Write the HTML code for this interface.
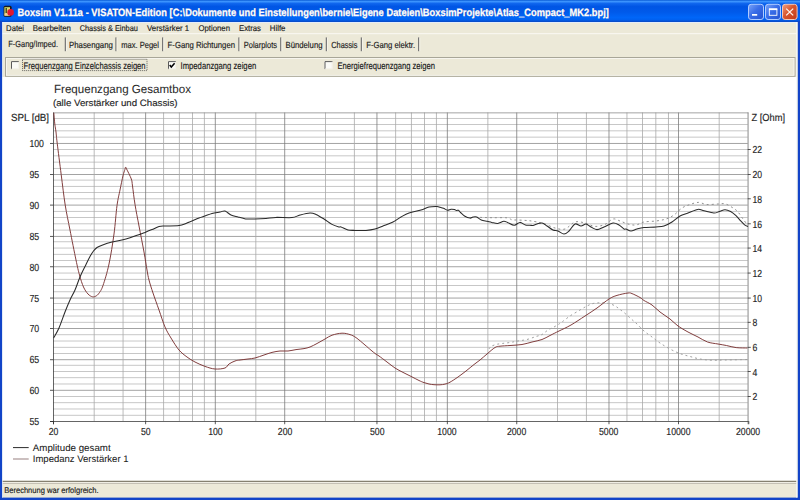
<!DOCTYPE html>
<html><head><meta charset="utf-8"><style>
html,body{margin:0;padding:0;width:800px;height:500px;overflow:hidden;background:#ECE9D8}
svg{display:block;font-family:"Liberation Sans", sans-serif;text-rendering:geometricPrecision}
</style></head><body>
<svg width="800" height="500" viewBox="0 0 800 500">
<rect x="0" y="0" width="800" height="500" fill="#ECE9D8"/>
<defs>
<linearGradient id="tb" x1="0" y1="0" x2="0" y2="1">
<stop offset="0" stop-color="#0A5CD6"/>
<stop offset="0.07" stop-color="#3C94FE"/>
<stop offset="0.16" stop-color="#0F66EE"/>
<stop offset="0.30" stop-color="#0055E4"/>
<stop offset="0.55" stop-color="#005AEA"/>
<stop offset="0.80" stop-color="#0066F8"/>
<stop offset="0.90" stop-color="#0060F0"/>
<stop offset="1" stop-color="#0A48C0"/>
</linearGradient>
<linearGradient id="btn" x1="0" y1="0" x2="1" y2="1">
<stop offset="0" stop-color="#7AA4F8"/>
<stop offset="0.45" stop-color="#3A6EE8"/>
<stop offset="1" stop-color="#2452D0"/>
</linearGradient>
<linearGradient id="cls" x1="0" y1="0" x2="1" y2="1">
<stop offset="0" stop-color="#F0A080"/>
<stop offset="0.45" stop-color="#D8562E"/>
<stop offset="1" stop-color="#C23A18"/>
</linearGradient>
</defs>
<rect x="0" y="0" width="800" height="22" fill="url(#tb)"/>
<rect x="0" y="21" width="2.1" height="479" fill="#1244C8"/>
<rect x="797.6" y="21" width="2.4" height="479" fill="#1244C8"/>
<rect x="0" y="497.6" width="800" height="2.4" fill="#1244C8"/>
<rect x="3.6" y="5.8" width="8" height="11" rx="1.5" fill="#1A1A1A"/>
<rect x="4.4" y="7.2" width="5.6" height="8.6" fill="#D8DC70"/>
<rect x="5.6" y="8" width="1.2" height="5" fill="#303010"/>
<rect x="4.6" y="13.5" width="3.5" height="2" fill="#F0C8A0"/>
<circle cx="10.6" cy="12.4" r="3.3" fill="#E01830"/>
<text x="18.3" y="16.4" font-size="10.6" text-anchor="start" fill="#0A2A90" font-weight="bold" textLength="591.5" lengthAdjust="spacingAndGlyphs" opacity="0.7">Boxsim V1.11a - VISATON-Edition [C:\Dokumente und Einstellungen\bernie\Eigene Dateien\BoxsimProjekte\Atlas_Compact_MK2.bpj]</text>
<text x="17.5" y="15.6" font-size="10.6" text-anchor="start" fill="#FFFFFF" font-weight="bold" textLength="591.5" lengthAdjust="spacingAndGlyphs" stroke="#FFFFFF" stroke-width="0.3">Boxsim V1.11a - VISATON-Edition [C:\Dokumente und Einstellungen\bernie\Eigene Dateien\BoxsimProjekte\Atlas_Compact_MK2.bpj]</text>
<rect x="748.5" y="4.3" width="15" height="15.2" rx="2.6" fill="url(#btn)" stroke="#B0CCFF" stroke-width="1"/>
<rect x="765.5" y="4.3" width="15" height="15.2" rx="2.6" fill="url(#btn)" stroke="#B0CCFF" stroke-width="1"/>
<rect x="752" y="14" width="5.2" height="1.7" fill="#FFFFFF"/>
<rect x="769.3" y="8.9" width="7.6" height="6.4" fill="none" stroke="#FFFFFF" stroke-width="0.9"/>
<rect x="769" y="8.5" width="8.2" height="1.6" fill="#FFFFFF"/>
<rect x="782.5" y="4.3" width="14.6" height="15.2" rx="2.6" fill="url(#cls)" stroke="#F4C8B8" stroke-width="1"/>
<path d="M786.2 8.6 L793.2 15.4 M793.2 8.6 L786.2 15.4" stroke="#FFF4EE" stroke-width="1.3"/>
<rect x="2" y="22" width="795" height="1" fill="#E4ECF8"/>
<text x="6.1" y="31.2" font-size="8.4" text-anchor="start" fill="#1a1a1a" stroke="#1a1a1a" stroke-width="0.15" textLength="18.0" lengthAdjust="spacingAndGlyphs">Datei</text>
<text x="32.8" y="31.2" font-size="8.4" text-anchor="start" fill="#1a1a1a" stroke="#1a1a1a" stroke-width="0.15" textLength="38.1" lengthAdjust="spacingAndGlyphs">Bearbeiten</text>
<text x="79.7" y="31.2" font-size="8.4" text-anchor="start" fill="#1a1a1a" stroke="#1a1a1a" stroke-width="0.15" textLength="58.2" lengthAdjust="spacingAndGlyphs">Chassis &amp; Einbau</text>
<text x="147.1" y="31.2" font-size="8.4" text-anchor="start" fill="#1a1a1a" stroke="#1a1a1a" stroke-width="0.15" textLength="42.0" lengthAdjust="spacingAndGlyphs">Verstärker 1</text>
<text x="198.5" y="31.2" font-size="8.4" text-anchor="start" fill="#1a1a1a" stroke="#1a1a1a" stroke-width="0.15" textLength="31.5" lengthAdjust="spacingAndGlyphs">Optionen</text>
<text x="239" y="31.2" font-size="8.4" text-anchor="start" fill="#1a1a1a" stroke="#1a1a1a" stroke-width="0.15" textLength="22" lengthAdjust="spacingAndGlyphs">Extras</text>
<text x="269.8" y="31.2" font-size="8.4" text-anchor="start" fill="#1a1a1a" stroke="#1a1a1a" stroke-width="0.15" textLength="15.6" lengthAdjust="spacingAndGlyphs">Hilfe</text>
<rect x="2" y="33.2" width="795" height="1" fill="#FAF9F4"/>
<text x="8.3" y="46.8" font-size="8.9" text-anchor="start" fill="#1a1a1a" stroke="#1a1a1a" stroke-width="0.15" textLength="49.7" lengthAdjust="spacingAndGlyphs">F-Gang/Imped.</text>
<text x="69" y="48.1" font-size="8.9" text-anchor="start" fill="#1a1a1a" stroke="#1a1a1a" stroke-width="0.15" textLength="43.9" lengthAdjust="spacingAndGlyphs">Phasengang</text>
<text x="121.2" y="48.1" font-size="8.9" text-anchor="start" fill="#1a1a1a" stroke="#1a1a1a" stroke-width="0.15" textLength="37.8" lengthAdjust="spacingAndGlyphs">max. Pegel</text>
<text x="167.6" y="48.1" font-size="8.9" text-anchor="start" fill="#1a1a1a" stroke="#1a1a1a" stroke-width="0.15" textLength="67.4" lengthAdjust="spacingAndGlyphs">F-Gang Richtungen</text>
<text x="243.75" y="48.1" font-size="8.9" text-anchor="start" fill="#1a1a1a" stroke="#1a1a1a" stroke-width="0.15" textLength="33.2" lengthAdjust="spacingAndGlyphs">Polarplots</text>
<text x="285.5" y="48.1" font-size="8.9" text-anchor="start" fill="#1a1a1a" stroke="#1a1a1a" stroke-width="0.15" textLength="37.0" lengthAdjust="spacingAndGlyphs">Bündelung</text>
<text x="331.25" y="48.1" font-size="8.9" text-anchor="start" fill="#1a1a1a" stroke="#1a1a1a" stroke-width="0.15" textLength="26.2" lengthAdjust="spacingAndGlyphs">Chassis</text>
<text x="366.25" y="48.1" font-size="8.9" text-anchor="start" fill="#1a1a1a" stroke="#1a1a1a" stroke-width="0.15" textLength="48.8" lengthAdjust="spacingAndGlyphs">F-Gang elektr.</text>
<rect x="64.75" y="37.4" width="1.2" height="13.8" fill="#767676"/>
<rect x="66.05" y="37.8" width="1" height="13.2" fill="#FFFFFF" opacity="0.45"/>
<rect x="115.30" y="37.4" width="1.2" height="13.8" fill="#767676"/>
<rect x="116.60" y="37.8" width="1" height="13.2" fill="#FFFFFF" opacity="0.45"/>
<rect x="162.00" y="37.4" width="1.2" height="13.8" fill="#767676"/>
<rect x="163.30" y="37.8" width="1" height="13.2" fill="#FFFFFF" opacity="0.45"/>
<rect x="238.25" y="37.4" width="1.2" height="13.8" fill="#767676"/>
<rect x="239.55" y="37.8" width="1" height="13.2" fill="#FFFFFF" opacity="0.45"/>
<rect x="280.10" y="37.4" width="1.2" height="13.8" fill="#767676"/>
<rect x="281.40" y="37.8" width="1" height="13.2" fill="#FFFFFF" opacity="0.45"/>
<rect x="325.75" y="37.4" width="1.2" height="13.8" fill="#767676"/>
<rect x="327.05" y="37.8" width="1" height="13.2" fill="#FFFFFF" opacity="0.45"/>
<rect x="360.75" y="37.4" width="1.2" height="13.8" fill="#767676"/>
<rect x="362.05" y="37.8" width="1" height="13.2" fill="#FFFFFF" opacity="0.45"/>
<rect x="418.00" y="37.4" width="1.2" height="13.8" fill="#767676"/>
<rect x="419.30" y="37.8" width="1" height="13.2" fill="#FFFFFF" opacity="0.45"/>
<rect x="5.5" y="57.5" width="789.5" height="18.8" fill="none" stroke="#A8A698" stroke-width="1"/>
<rect x="6.5" y="58.5" width="787.5" height="16.8" fill="none" stroke="#FFFFFF" stroke-width="0.8" opacity="0.7"/>
<rect x="11" y="61.1" width="8.0" height="8.0" fill="#FAFAF6"/>
<path d="M11.5 69.1 V61.6 H19.0" fill="none" stroke="#5A5A5A" stroke-width="1"/>
<path d="M18.6 61.7 V68.69999999999999 H11.6" fill="none" stroke="#F0EEE4" stroke-width="0.8"/>
<rect x="168" y="61.1" width="8.0" height="8.0" fill="#FAFAF6"/>
<path d="M168.5 69.1 V61.6 H176.0" fill="none" stroke="#5A5A5A" stroke-width="1"/>
<path d="M175.6 61.7 V68.69999999999999 H168.6" fill="none" stroke="#F0EEE4" stroke-width="0.8"/>
<path d="M169.7 65.0 L171.3 67.0 L174.6 63.300000000000004" fill="none" stroke="#000" stroke-width="1.5"/>
<rect x="324.5" y="61.1" width="8.0" height="8.0" fill="#FAFAF6"/>
<path d="M325.0 69.1 V61.6 H332.5" fill="none" stroke="#5A5A5A" stroke-width="1"/>
<path d="M332.1 61.7 V68.69999999999999 H325.1" fill="none" stroke="#F0EEE4" stroke-width="0.8"/>
<text x="23.6" y="68.5" font-size="9.6" text-anchor="start" fill="#1a1a1a" stroke="#1a1a1a" stroke-width="0.15" textLength="122" lengthAdjust="spacingAndGlyphs">Frequenzgang Einzelchassis zeigen</text>
<text x="180.5" y="68.5" font-size="9.6" text-anchor="start" fill="#1a1a1a" stroke="#1a1a1a" stroke-width="0.15" textLength="75.7" lengthAdjust="spacingAndGlyphs">Impedanzgang zeigen</text>
<text x="337.5" y="68.5" font-size="9.6" text-anchor="start" fill="#1a1a1a" stroke="#1a1a1a" stroke-width="0.15" textLength="97.5" lengthAdjust="spacingAndGlyphs">Energiefrequenzgang zeigen</text>
<rect x="22.5" y="59.3" width="124.5" height="11.3" fill="none" stroke="#404040" stroke-width="0.8" stroke-dasharray="1 1"/>
<rect x="2" y="77" width="795" height="404" fill="#FFFFFF"/>
<rect x="53.1250" y="414.8438" width="694.5312" height="0.78125" fill="#B8B8B8"/>
<rect x="53.1250" y="408.5938" width="694.5312" height="0.78125" fill="#B8B8B8"/>
<rect x="53.1250" y="402.3438" width="694.5312" height="0.78125" fill="#B8B8B8"/>
<rect x="53.1250" y="396.0938" width="694.5312" height="0.78125" fill="#B8B8B8"/>
<rect x="53.1250" y="389.8438" width="694.5312" height="0.78125" fill="#8A8A8A"/>
<rect x="53.1250" y="383.5938" width="694.5312" height="0.78125" fill="#B8B8B8"/>
<rect x="53.1250" y="377.3438" width="694.5312" height="0.78125" fill="#B8B8B8"/>
<rect x="53.1250" y="371.0938" width="694.5312" height="0.78125" fill="#B8B8B8"/>
<rect x="53.1250" y="364.8438" width="694.5312" height="0.78125" fill="#B8B8B8"/>
<rect x="53.1250" y="359.3750" width="694.5312" height="0.78125" fill="#8A8A8A"/>
<rect x="53.1250" y="353.1250" width="694.5312" height="0.78125" fill="#B8B8B8"/>
<rect x="53.1250" y="346.8750" width="694.5312" height="0.78125" fill="#B8B8B8"/>
<rect x="53.1250" y="340.6250" width="694.5312" height="0.78125" fill="#B8B8B8"/>
<rect x="53.1250" y="334.3750" width="694.5312" height="0.78125" fill="#B8B8B8"/>
<rect x="53.1250" y="328.1250" width="694.5312" height="0.78125" fill="#8A8A8A"/>
<rect x="53.1250" y="321.8750" width="694.5312" height="0.78125" fill="#B8B8B8"/>
<rect x="53.1250" y="315.6250" width="694.5312" height="0.78125" fill="#B8B8B8"/>
<rect x="53.1250" y="309.3750" width="694.5312" height="0.78125" fill="#B8B8B8"/>
<rect x="53.1250" y="303.1250" width="694.5312" height="0.78125" fill="#B8B8B8"/>
<rect x="53.1250" y="297.6562" width="694.5312" height="0.78125" fill="#8A8A8A"/>
<rect x="53.1250" y="291.4062" width="694.5312" height="0.78125" fill="#B8B8B8"/>
<rect x="53.1250" y="285.1562" width="694.5312" height="0.78125" fill="#B8B8B8"/>
<rect x="53.1250" y="278.9062" width="694.5312" height="0.78125" fill="#B8B8B8"/>
<rect x="53.1250" y="272.6562" width="694.5312" height="0.78125" fill="#B8B8B8"/>
<rect x="53.1250" y="266.4062" width="694.5312" height="0.78125" fill="#8A8A8A"/>
<rect x="53.1250" y="260.1562" width="694.5312" height="0.78125" fill="#B8B8B8"/>
<rect x="53.1250" y="253.9062" width="694.5312" height="0.78125" fill="#B8B8B8"/>
<rect x="53.1250" y="247.6562" width="694.5312" height="0.78125" fill="#B8B8B8"/>
<rect x="53.1250" y="241.4062" width="694.5312" height="0.78125" fill="#B8B8B8"/>
<rect x="53.1250" y="235.9375" width="694.5312" height="0.78125" fill="#8A8A8A"/>
<rect x="53.1250" y="229.6875" width="694.5312" height="0.78125" fill="#B8B8B8"/>
<rect x="53.1250" y="223.4375" width="694.5312" height="0.78125" fill="#B8B8B8"/>
<rect x="53.1250" y="217.1875" width="694.5312" height="0.78125" fill="#B8B8B8"/>
<rect x="53.1250" y="210.9375" width="694.5312" height="0.78125" fill="#B8B8B8"/>
<rect x="53.1250" y="204.6875" width="694.5312" height="0.78125" fill="#8A8A8A"/>
<rect x="53.1250" y="198.4375" width="694.5312" height="0.78125" fill="#B8B8B8"/>
<rect x="53.1250" y="192.1875" width="694.5312" height="0.78125" fill="#B8B8B8"/>
<rect x="53.1250" y="185.9375" width="694.5312" height="0.78125" fill="#B8B8B8"/>
<rect x="53.1250" y="179.6875" width="694.5312" height="0.78125" fill="#B8B8B8"/>
<rect x="53.1250" y="174.2188" width="694.5312" height="0.78125" fill="#8A8A8A"/>
<rect x="53.1250" y="167.9688" width="694.5312" height="0.78125" fill="#B8B8B8"/>
<rect x="53.1250" y="161.7188" width="694.5312" height="0.78125" fill="#B8B8B8"/>
<rect x="53.1250" y="155.4688" width="694.5312" height="0.78125" fill="#B8B8B8"/>
<rect x="53.1250" y="149.2188" width="694.5312" height="0.78125" fill="#B8B8B8"/>
<rect x="53.1250" y="142.9688" width="694.5312" height="0.78125" fill="#8A8A8A"/>
<rect x="53.1250" y="136.7188" width="694.5312" height="0.78125" fill="#B8B8B8"/>
<rect x="53.1250" y="130.4688" width="694.5312" height="0.78125" fill="#B8B8B8"/>
<rect x="53.1250" y="124.2188" width="694.5312" height="0.78125" fill="#B8B8B8"/>
<rect x="53.1250" y="117.9688" width="694.5312" height="0.78125" fill="#B8B8B8"/>
<rect x="93.7500" y="112.5000" width="0.78125" height="308.5938" fill="#A8A8A8"/>
<rect x="122.6562" y="112.5000" width="0.78125" height="308.5938" fill="#A8A8A8"/>
<rect x="145.3125" y="112.5000" width="0.78125" height="308.5938" fill="#7A7A7A"/>
<rect x="163.2812" y="112.5000" width="0.78125" height="308.5938" fill="#A8A8A8"/>
<rect x="178.9062" y="112.5000" width="0.78125" height="308.5938" fill="#A8A8A8"/>
<rect x="192.1875" y="112.5000" width="0.78125" height="308.5938" fill="#A8A8A8"/>
<rect x="203.9062" y="112.5000" width="0.78125" height="308.5938" fill="#A8A8A8"/>
<rect x="214.8438" y="112.5000" width="0.78125" height="308.5938" fill="#7A7A7A"/>
<rect x="255.4688" y="112.5000" width="0.78125" height="308.5938" fill="#A8A8A8"/>
<rect x="284.3750" y="112.5000" width="0.78125" height="308.5938" fill="#7A7A7A"/>
<rect x="325.0000" y="112.5000" width="0.78125" height="308.5938" fill="#A8A8A8"/>
<rect x="353.9062" y="112.5000" width="0.78125" height="308.5938" fill="#A8A8A8"/>
<rect x="376.5625" y="112.5000" width="0.78125" height="308.5938" fill="#7A7A7A"/>
<rect x="395.3125" y="112.5000" width="0.78125" height="308.5938" fill="#A8A8A8"/>
<rect x="410.9375" y="112.5000" width="0.78125" height="308.5938" fill="#A8A8A8"/>
<rect x="424.2188" y="112.5000" width="0.78125" height="308.5938" fill="#A8A8A8"/>
<rect x="435.9375" y="112.5000" width="0.78125" height="308.5938" fill="#A8A8A8"/>
<rect x="446.8750" y="112.5000" width="0.78125" height="308.5938" fill="#7A7A7A"/>
<rect x="487.5000" y="112.5000" width="0.78125" height="308.5938" fill="#A8A8A8"/>
<rect x="516.4062" y="112.5000" width="0.78125" height="308.5938" fill="#7A7A7A"/>
<rect x="557.0312" y="112.5000" width="0.78125" height="308.5938" fill="#A8A8A8"/>
<rect x="585.9375" y="112.5000" width="0.78125" height="308.5938" fill="#A8A8A8"/>
<rect x="608.5938" y="112.5000" width="0.78125" height="308.5938" fill="#7A7A7A"/>
<rect x="626.5625" y="112.5000" width="0.78125" height="308.5938" fill="#A8A8A8"/>
<rect x="642.1875" y="112.5000" width="0.78125" height="308.5938" fill="#A8A8A8"/>
<rect x="655.4688" y="112.5000" width="0.78125" height="308.5938" fill="#A8A8A8"/>
<rect x="667.9688" y="112.5000" width="0.78125" height="308.5938" fill="#A8A8A8"/>
<rect x="678.1250" y="112.5000" width="0.78125" height="308.5938" fill="#7A7A7A"/>
<rect x="718.7500" y="112.5000" width="0.78125" height="308.5938" fill="#A8A8A8"/>
<rect x="53.1250" y="112.5000" width="695.3125" height="0.78125" fill="#8A8A8A"/>
<rect x="747.6562" y="112.5000" width="0.78125" height="311.7188" fill="#6A6A6A"/>
<rect x="53.1250" y="112.5000" width="0.78125" height="311.7188" fill="#3A3A3A"/>
<rect x="50.0000" y="421.0938" width="698.4375" height="0.78125" fill="#3A3A3A"/>
<rect x="50.0000" y="421.0938" width="3.1250" height="0.78125" fill="#2A2A2A"/>
<text x="29.4" y="425.0" font-size="10.2" text-anchor="start" fill="#1e1e1e" stroke="#1e1e1e" stroke-width="0.15" textLength="9.8" lengthAdjust="spacingAndGlyphs">55</text>
<rect x="50.0000" y="389.8438" width="3.1250" height="0.78125" fill="#2A2A2A"/>
<text x="29.4" y="394.14" font-size="10.2" text-anchor="start" fill="#1e1e1e" stroke="#1e1e1e" stroke-width="0.15" textLength="9.8" lengthAdjust="spacingAndGlyphs">60</text>
<rect x="50.0000" y="359.3750" width="3.1250" height="0.78125" fill="#2A2A2A"/>
<text x="29.4" y="363.28" font-size="10.2" text-anchor="start" fill="#1e1e1e" stroke="#1e1e1e" stroke-width="0.15" textLength="9.8" lengthAdjust="spacingAndGlyphs">65</text>
<rect x="50.0000" y="328.1250" width="3.1250" height="0.78125" fill="#2A2A2A"/>
<text x="29.4" y="332.42" font-size="10.2" text-anchor="start" fill="#1e1e1e" stroke="#1e1e1e" stroke-width="0.15" textLength="9.8" lengthAdjust="spacingAndGlyphs">70</text>
<rect x="50.0000" y="297.6562" width="3.1250" height="0.78125" fill="#2A2A2A"/>
<text x="29.4" y="301.56" font-size="10.2" text-anchor="start" fill="#1e1e1e" stroke="#1e1e1e" stroke-width="0.15" textLength="9.8" lengthAdjust="spacingAndGlyphs">75</text>
<rect x="50.0000" y="266.4062" width="3.1250" height="0.78125" fill="#2A2A2A"/>
<text x="29.4" y="270.7" font-size="10.2" text-anchor="start" fill="#1e1e1e" stroke="#1e1e1e" stroke-width="0.15" textLength="9.8" lengthAdjust="spacingAndGlyphs">80</text>
<rect x="50.0000" y="235.9375" width="3.1250" height="0.78125" fill="#2A2A2A"/>
<text x="29.4" y="239.84" font-size="10.2" text-anchor="start" fill="#1e1e1e" stroke="#1e1e1e" stroke-width="0.15" textLength="9.8" lengthAdjust="spacingAndGlyphs">85</text>
<rect x="50.0000" y="204.6875" width="3.1250" height="0.78125" fill="#2A2A2A"/>
<text x="29.4" y="208.98" font-size="10.2" text-anchor="start" fill="#1e1e1e" stroke="#1e1e1e" stroke-width="0.15" textLength="9.8" lengthAdjust="spacingAndGlyphs">90</text>
<rect x="50.0000" y="174.2188" width="3.1250" height="0.78125" fill="#2A2A2A"/>
<text x="29.4" y="178.12" font-size="10.2" text-anchor="start" fill="#1e1e1e" stroke="#1e1e1e" stroke-width="0.15" textLength="9.8" lengthAdjust="spacingAndGlyphs">95</text>
<rect x="50.0000" y="142.9688" width="3.1250" height="0.78125" fill="#2A2A2A"/>
<text x="29.4" y="147.26" font-size="10.2" text-anchor="start" fill="#1e1e1e" stroke="#1e1e1e" stroke-width="0.15" textLength="14.6" lengthAdjust="spacingAndGlyphs">100</text>
<text x="10.9" y="120.8" font-size="10.3" text-anchor="start" fill="#1e1e1e" stroke="#1e1e1e" stroke-width="0.15" textLength="38.2" lengthAdjust="spacingAndGlyphs">SPL [dB]</text>
<rect x="747.6562" y="396.0938" width="3.1250" height="0.78125" fill="#2A2A2A"/>
<text x="752.4" y="400.31" font-size="10.2" text-anchor="start" fill="#1e1e1e" stroke="#1e1e1e" stroke-width="0.15" textLength="4.8" lengthAdjust="spacingAndGlyphs">2</text>
<rect x="747.6562" y="371.0938" width="3.1250" height="0.78125" fill="#2A2A2A"/>
<text x="752.4" y="375.62" font-size="10.2" text-anchor="start" fill="#1e1e1e" stroke="#1e1e1e" stroke-width="0.15" textLength="4.8" lengthAdjust="spacingAndGlyphs">4</text>
<rect x="747.6562" y="346.8750" width="3.1250" height="0.78125" fill="#2A2A2A"/>
<text x="752.4" y="350.94" font-size="10.2" text-anchor="start" fill="#1e1e1e" stroke="#1e1e1e" stroke-width="0.15" textLength="4.8" lengthAdjust="spacingAndGlyphs">6</text>
<rect x="747.6562" y="321.8750" width="3.1250" height="0.78125" fill="#2A2A2A"/>
<text x="752.4" y="326.25" font-size="10.2" text-anchor="start" fill="#1e1e1e" stroke="#1e1e1e" stroke-width="0.15" textLength="4.8" lengthAdjust="spacingAndGlyphs">8</text>
<rect x="747.6562" y="297.6562" width="3.1250" height="0.78125" fill="#2A2A2A"/>
<text x="752.4" y="301.56" font-size="10.2" text-anchor="start" fill="#1e1e1e" stroke="#1e1e1e" stroke-width="0.15" textLength="9.6" lengthAdjust="spacingAndGlyphs">10</text>
<rect x="747.6562" y="272.6562" width="3.1250" height="0.78125" fill="#2A2A2A"/>
<text x="752.4" y="276.87" font-size="10.2" text-anchor="start" fill="#1e1e1e" stroke="#1e1e1e" stroke-width="0.15" textLength="9.6" lengthAdjust="spacingAndGlyphs">12</text>
<rect x="747.6562" y="247.6562" width="3.1250" height="0.78125" fill="#2A2A2A"/>
<text x="752.4" y="252.18" font-size="10.2" text-anchor="start" fill="#1e1e1e" stroke="#1e1e1e" stroke-width="0.15" textLength="9.6" lengthAdjust="spacingAndGlyphs">14</text>
<rect x="747.6562" y="223.4375" width="3.1250" height="0.78125" fill="#2A2A2A"/>
<text x="752.4" y="227.5" font-size="10.2" text-anchor="start" fill="#1e1e1e" stroke="#1e1e1e" stroke-width="0.15" textLength="9.6" lengthAdjust="spacingAndGlyphs">16</text>
<rect x="747.6562" y="198.4375" width="3.1250" height="0.78125" fill="#2A2A2A"/>
<text x="752.4" y="202.81" font-size="10.2" text-anchor="start" fill="#1e1e1e" stroke="#1e1e1e" stroke-width="0.15" textLength="9.6" lengthAdjust="spacingAndGlyphs">18</text>
<rect x="747.6562" y="174.2188" width="3.1250" height="0.78125" fill="#2A2A2A"/>
<text x="752.4" y="178.12" font-size="10.2" text-anchor="start" fill="#1e1e1e" stroke="#1e1e1e" stroke-width="0.15" textLength="9.6" lengthAdjust="spacingAndGlyphs">20</text>
<rect x="747.6562" y="149.2188" width="3.1250" height="0.78125" fill="#2A2A2A"/>
<text x="752.4" y="153.43" font-size="10.2" text-anchor="start" fill="#1e1e1e" stroke="#1e1e1e" stroke-width="0.15" textLength="9.6" lengthAdjust="spacingAndGlyphs">22</text>
<text x="751.5" y="121" font-size="10.3" text-anchor="start" fill="#1e1e1e" stroke="#1e1e1e" stroke-width="0.15" textLength="33.5" lengthAdjust="spacingAndGlyphs">Z [Ohm]</text>
<rect x="53.1250" y="421.0938" width="0.78125" height="3.1250" fill="#2A2A2A"/>
<text x="53.6" y="434.6" font-size="10.2" text-anchor="middle" fill="#1e1e1e" stroke="#1e1e1e" stroke-width="0.15" textLength="9.68" lengthAdjust="spacingAndGlyphs">20</text>
<rect x="145.3125" y="421.0938" width="0.78125" height="3.1250" fill="#2A2A2A"/>
<text x="145.72" y="434.6" font-size="10.2" text-anchor="middle" fill="#1e1e1e" stroke="#1e1e1e" stroke-width="0.15" textLength="9.68" lengthAdjust="spacingAndGlyphs">50</text>
<rect x="214.8438" y="421.0938" width="0.78125" height="3.1250" fill="#2A2A2A"/>
<text x="215.41" y="434.6" font-size="10.2" text-anchor="middle" fill="#1e1e1e" stroke="#1e1e1e" stroke-width="0.15" textLength="14.52" lengthAdjust="spacingAndGlyphs">100</text>
<rect x="284.3750" y="421.0938" width="0.78125" height="3.1250" fill="#2A2A2A"/>
<text x="285.1" y="434.6" font-size="10.2" text-anchor="middle" fill="#1e1e1e" stroke="#1e1e1e" stroke-width="0.15" textLength="14.52" lengthAdjust="spacingAndGlyphs">200</text>
<rect x="376.5625" y="421.0938" width="0.78125" height="3.1250" fill="#2A2A2A"/>
<text x="377.22" y="434.6" font-size="10.2" text-anchor="middle" fill="#1e1e1e" stroke="#1e1e1e" stroke-width="0.15" textLength="14.52" lengthAdjust="spacingAndGlyphs">500</text>
<rect x="446.8750" y="421.0938" width="0.78125" height="3.1250" fill="#2A2A2A"/>
<text x="446.91" y="434.6" font-size="10.2" text-anchor="middle" fill="#1e1e1e" stroke="#1e1e1e" stroke-width="0.15" textLength="19.36" lengthAdjust="spacingAndGlyphs">1000</text>
<rect x="516.4062" y="421.0938" width="0.78125" height="3.1250" fill="#2A2A2A"/>
<text x="516.6" y="434.6" font-size="10.2" text-anchor="middle" fill="#1e1e1e" stroke="#1e1e1e" stroke-width="0.15" textLength="19.36" lengthAdjust="spacingAndGlyphs">2000</text>
<rect x="608.5938" y="421.0938" width="0.78125" height="3.1250" fill="#2A2A2A"/>
<text x="608.72" y="434.6" font-size="10.2" text-anchor="middle" fill="#1e1e1e" stroke="#1e1e1e" stroke-width="0.15" textLength="19.36" lengthAdjust="spacingAndGlyphs">5000</text>
<rect x="678.1250" y="421.0938" width="0.78125" height="3.1250" fill="#2A2A2A"/>
<text x="678.41" y="434.6" font-size="10.2" text-anchor="middle" fill="#1e1e1e" stroke="#1e1e1e" stroke-width="0.15" textLength="24.2" lengthAdjust="spacingAndGlyphs">10000</text>
<rect x="748.4375" y="421.0938" width="0.78125" height="3.1250" fill="#2A2A2A"/>
<text x="748.1" y="434.6" font-size="10.2" text-anchor="middle" fill="#1e1e1e" stroke="#1e1e1e" stroke-width="0.15" textLength="24.2" lengthAdjust="spacingAndGlyphs">20000</text>
<text x="54" y="93" font-size="11.8" text-anchor="start" fill="#2a2a2a" stroke="#2a2a2a" stroke-width="0.05" textLength="137" lengthAdjust="spacingAndGlyphs">Frequenzgang Gesamtbox</text>
<text x="53" y="105.6" font-size="9.2" text-anchor="start" fill="#1e1e1e" stroke="#1e1e1e" stroke-width="0.15" textLength="124.5" lengthAdjust="spacingAndGlyphs">(alle Verstärker und Chassis)</text>
<path d="M480.00 217.40 C482.00 217.45 487.50 217.63 492.00 217.70 C496.50 217.77 503.67 217.45 507.00 217.80 C510.33 218.15 510.17 219.43 512.00 219.80 C513.83 220.17 515.83 219.90 518.00 220.00 C520.17 220.10 523.00 220.27 525.00 220.40 C527.00 220.53 528.00 220.53 530.00 220.80 C532.00 221.07 534.50 221.47 537.00 222.00 C539.50 222.53 542.00 223.00 545.00 224.00 C548.00 225.00 551.67 227.17 555.00 228.00 C558.33 228.83 561.67 230.00 565.00 229.00 C568.33 228.00 571.67 223.00 575.00 222.00 C578.33 221.00 581.67 222.27 585.00 223.00 C588.33 223.73 591.67 226.17 595.00 226.40 C598.33 226.63 602.00 225.63 605.00 224.40 C608.00 223.17 610.50 219.57 613.00 219.00 C615.50 218.43 617.50 220.17 620.00 221.00 C622.50 221.83 625.33 223.33 628.00 224.00 C630.67 224.67 633.33 225.33 636.00 225.00 C638.67 224.67 640.67 222.67 644.00 222.00 C647.33 221.33 652.33 221.50 656.00 221.00 C659.67 220.50 663.00 220.00 666.00 219.00 C669.00 218.00 671.33 216.83 674.00 215.00 C676.67 213.17 679.33 209.75 682.00 208.00 C684.67 206.25 687.27 205.43 690.00 204.50 C692.73 203.57 695.60 202.40 698.40 202.40 C701.20 202.40 703.53 204.23 706.80 204.50 C710.07 204.77 714.97 204.12 718.00 204.00 C721.03 203.88 722.67 203.25 725.00 203.80 C727.33 204.35 729.90 206.02 732.00 207.30 C734.10 208.58 735.77 209.55 737.60 211.50 C739.43 213.45 741.37 216.78 743.00 219.00 C744.63 221.22 746.67 223.83 747.40 224.80" fill="none" stroke="#909090" stroke-width="1" stroke-dasharray="2 3"/>
<path d="M489.00 349.00 C489.33 348.58 489.83 347.25 491.00 346.50 C492.17 345.75 494.17 345.00 496.00 344.50 C497.83 344.00 499.67 343.83 502.00 343.50 C504.33 343.17 507.33 342.92 510.00 342.50 C512.67 342.08 515.17 341.50 518.00 341.00 C520.83 340.50 524.00 340.25 527.00 339.50 C530.00 338.75 533.50 337.33 536.00 336.50 C538.50 335.67 540.00 335.58 542.00 334.50 C544.00 333.42 546.00 331.25 548.00 330.00 C550.00 328.75 552.17 328.00 554.00 327.00 C555.83 326.00 557.67 324.83 559.00 324.00 C560.33 323.17 560.17 323.33 562.00 322.00 C563.83 320.67 567.00 318.00 570.00 316.00 C573.00 314.00 577.17 311.67 580.00 310.00 C582.83 308.33 584.83 307.08 587.00 306.00 C589.17 304.92 590.83 304.03 593.00 303.50 C595.17 302.97 597.83 302.88 600.00 302.80 C602.17 302.72 604.00 302.72 606.00 303.00 C608.00 303.28 610.33 303.92 612.00 304.50 C613.67 305.08 614.67 305.67 616.00 306.50 C617.33 307.33 618.67 308.50 620.00 309.50 C621.33 310.50 622.50 311.25 624.00 312.50 C625.50 313.75 627.50 315.67 629.00 317.00 C630.50 318.33 631.67 319.33 633.00 320.50 C634.33 321.67 635.17 322.25 637.00 324.00 C638.83 325.75 641.50 328.83 644.00 331.00 C646.50 333.17 649.33 335.00 652.00 337.00 C654.67 339.00 657.00 341.00 660.00 343.00 C663.00 345.00 666.67 347.23 670.00 349.00 C673.33 350.77 676.67 352.35 680.00 353.60 C683.33 354.85 686.67 355.60 690.00 356.50 C693.33 357.40 696.50 358.38 700.00 359.00 C703.50 359.62 706.83 360.03 711.00 360.20 C715.17 360.37 718.93 360.12 725.00 360.00 C731.07 359.88 743.67 359.58 747.40 359.50" fill="none" stroke="#A0A0A0" stroke-width="1" stroke-dasharray="2 3"/>
<path d="M53.80 112.80 C53.97 114.67 54.43 120.80 54.80 124.00 C55.17 127.20 55.60 128.80 56.00 132.00 C56.40 135.20 56.33 136.10 57.20 143.20 C58.07 150.30 59.87 164.30 61.20 174.60 C62.53 184.90 63.73 195.77 65.20 205.00 C66.67 214.23 68.20 220.83 70.00 230.00 C71.80 239.17 74.42 252.50 76.00 260.00 C77.58 267.50 78.25 270.50 79.50 275.00 C80.75 279.50 82.08 283.83 83.50 287.00 C84.92 290.17 86.50 292.37 88.00 294.00 C89.50 295.63 91.17 296.47 92.50 296.80 C93.83 297.13 94.92 296.60 96.00 296.00 C97.08 295.40 97.83 294.95 99.00 293.20 C100.17 291.45 101.33 290.37 103.00 285.50 C104.67 280.63 107.17 272.58 109.00 264.00 C110.83 255.42 112.67 243.73 114.00 234.00 C115.33 224.27 116.00 212.93 117.00 205.60 C118.00 198.27 119.00 194.97 120.00 190.00 C121.00 185.03 122.18 179.22 123.00 175.80 C123.82 172.38 124.47 170.93 124.90 169.50 C125.33 168.07 125.33 167.32 125.60 167.20 C125.87 167.08 125.55 166.83 126.50 168.80 C127.45 170.77 130.30 176.13 131.30 179.00 C132.30 181.87 131.88 181.77 132.50 186.00 C133.12 190.23 133.92 197.73 135.00 204.40 C136.08 211.07 137.50 218.07 139.00 226.00 C140.50 233.93 142.67 244.67 144.00 252.00 C145.33 259.33 146.17 265.33 147.00 270.00 C147.83 274.67 148.00 276.17 149.00 280.00 C150.00 283.83 151.33 288.00 153.00 293.00 C154.67 298.00 157.00 304.33 159.00 310.00 C161.00 315.67 163.00 322.33 165.00 327.00 C167.00 331.67 168.67 334.17 171.00 338.00 C173.33 341.83 176.33 346.83 179.00 350.00 C181.67 353.17 184.33 355.00 187.00 357.00 C189.67 359.00 192.00 360.43 195.00 362.00 C198.00 363.57 201.67 365.23 205.00 366.40 C208.33 367.57 211.67 368.73 215.00 369.00 C218.33 369.27 222.67 368.83 225.00 368.00 C227.33 367.17 227.33 365.17 229.00 364.00 C230.67 362.83 233.17 361.67 235.00 361.00 C236.83 360.33 237.83 360.33 240.00 360.00 C242.17 359.67 245.50 359.33 248.00 359.00 C250.50 358.67 252.33 358.67 255.00 358.00 C257.67 357.33 261.17 355.93 264.00 355.00 C266.83 354.07 269.33 353.07 272.00 352.40 C274.67 351.73 277.33 351.23 280.00 351.00 C282.67 350.77 285.33 351.23 288.00 351.00 C290.67 350.77 293.33 350.00 296.00 349.60 C298.67 349.20 301.67 349.03 304.00 348.60 C306.33 348.17 307.83 347.85 310.00 347.00 C312.17 346.15 314.50 344.83 317.00 343.50 C319.50 342.17 322.50 340.38 325.00 339.00 C327.50 337.62 329.17 336.17 332.00 335.20 C334.83 334.23 339.00 333.30 342.00 333.20 C345.00 333.10 347.67 333.87 350.00 334.60 C352.33 335.33 353.50 335.87 356.00 337.60 C358.50 339.33 362.50 342.90 365.00 345.00 C367.50 347.10 369.17 348.67 371.00 350.20 C372.83 351.73 374.67 353.23 376.00 354.20 C377.33 355.17 377.17 354.70 379.00 356.00 C380.83 357.30 384.33 360.00 387.00 362.00 C389.67 364.00 392.33 366.27 395.00 368.00 C397.67 369.73 400.33 371.00 403.00 372.40 C405.67 373.80 408.33 375.05 411.00 376.40 C413.67 377.75 416.83 379.47 419.00 380.50 C421.17 381.53 422.33 382.02 424.00 382.60 C425.67 383.18 427.33 383.65 429.00 384.00 C430.67 384.35 432.17 384.57 434.00 384.70 C435.83 384.83 438.17 384.90 440.00 384.80 C441.83 384.70 443.33 384.53 445.00 384.10 C446.67 383.67 447.83 383.38 450.00 382.20 C452.17 381.02 455.33 378.87 458.00 377.00 C460.67 375.13 463.33 373.08 466.00 371.00 C468.67 368.92 471.67 366.33 474.00 364.50 C476.33 362.67 477.83 361.75 480.00 360.00 C482.17 358.25 484.50 356.08 487.00 354.00 C489.50 351.92 492.83 348.80 495.00 347.50 C497.17 346.20 497.50 346.53 500.00 346.20 C502.50 345.87 506.33 345.78 510.00 345.50 C513.67 345.22 518.33 345.08 522.00 344.50 C525.67 343.92 528.67 342.83 532.00 342.00 C535.33 341.17 539.00 340.58 542.00 339.50 C545.00 338.42 547.17 336.92 550.00 335.50 C552.83 334.08 555.50 332.75 559.00 331.00 C562.50 329.25 566.67 327.50 571.00 325.00 C575.33 322.50 580.67 318.83 585.00 316.00 C589.33 313.17 593.00 310.83 597.00 308.00 C601.00 305.17 605.67 301.10 609.00 299.00 C612.33 296.90 613.83 296.40 617.00 295.40 C620.17 294.40 625.50 293.30 628.00 293.00 C630.50 292.70 630.00 292.85 632.00 293.60 C634.00 294.35 638.00 296.35 640.00 297.50 C642.00 298.65 642.00 299.25 644.00 300.50 C646.00 301.75 649.33 303.08 652.00 305.00 C654.67 306.92 657.00 309.67 660.00 312.00 C663.00 314.33 667.00 316.67 670.00 319.00 C673.00 321.33 675.00 323.83 678.00 326.00 C681.00 328.17 684.67 330.17 688.00 332.00 C691.33 333.83 694.75 335.33 698.00 337.00 C701.25 338.67 704.17 340.83 707.50 342.00 C710.83 343.17 714.85 343.42 718.00 344.00 C721.15 344.58 723.37 344.90 726.40 345.50 C729.43 346.10 732.70 347.18 736.20 347.60 C739.70 348.02 745.53 347.93 747.40 348.00" fill="none" stroke="#7A3434" stroke-width="0.95" stroke-linejoin="round"/>
<path d="M53.60 338.00 C54.50 336.33 57.10 332.33 59.00 328.00 C60.90 323.67 63.17 316.67 65.00 312.00 C66.83 307.33 68.33 303.67 70.00 300.00 C71.67 296.33 73.33 293.83 75.00 290.00 C76.67 286.17 78.17 281.25 80.00 277.00 C81.83 272.75 84.33 267.92 86.00 264.50 C87.67 261.08 88.75 258.75 90.00 256.50 C91.25 254.25 92.33 252.50 93.50 251.00 C94.67 249.50 95.58 248.47 97.00 247.50 C98.42 246.53 99.50 246.12 102.00 245.20 C104.50 244.28 108.00 243.03 112.00 242.00 C116.00 240.97 121.67 240.17 126.00 239.00 C130.33 237.83 134.83 236.10 138.00 235.00 C141.17 233.90 142.67 233.30 145.00 232.40 C147.33 231.50 149.67 230.57 152.00 229.60 C154.33 228.63 156.83 227.20 159.00 226.60 C161.17 226.00 161.67 226.17 165.00 226.00 C168.33 225.83 175.33 226.10 179.00 225.60 C182.67 225.10 183.67 224.27 187.00 223.00 C190.33 221.73 196.00 219.17 199.00 218.00 C202.00 216.83 202.83 216.77 205.00 216.00 C207.17 215.23 209.50 214.07 212.00 213.40 C214.50 212.73 217.83 212.40 220.00 212.00 C222.17 211.60 223.17 210.50 225.00 211.00 C226.83 211.50 228.83 214.00 231.00 215.00 C233.17 216.00 235.83 216.40 238.00 217.00 C240.17 217.60 242.50 218.27 244.00 218.60 C245.50 218.93 245.17 218.93 247.00 219.00 C248.83 219.07 251.83 219.10 255.00 219.00 C258.17 218.90 262.50 218.67 266.00 218.40 C269.50 218.13 271.67 217.53 276.00 217.40 C280.33 217.27 288.00 218.00 292.00 217.60 C296.00 217.20 297.00 215.77 300.00 215.00 C303.00 214.23 307.33 213.10 310.00 213.00 C312.67 212.90 313.67 213.40 316.00 214.40 C318.33 215.40 321.33 217.33 324.00 219.00 C326.67 220.67 329.50 223.07 332.00 224.40 C334.50 225.73 337.50 226.57 339.00 227.00 C340.50 227.43 339.50 226.50 341.00 227.00 C342.50 227.50 345.67 229.43 348.00 230.00 C350.33 230.57 352.00 230.33 355.00 230.40 C358.00 230.47 362.67 230.63 366.00 230.40 C369.33 230.17 372.17 229.73 375.00 229.00 C377.83 228.27 380.00 227.17 383.00 226.00 C386.00 224.83 390.00 223.50 393.00 222.00 C396.00 220.50 398.33 218.50 401.00 217.00 C403.67 215.50 405.67 214.17 409.00 213.00 C412.33 211.83 417.67 211.00 421.00 210.00 C424.33 209.00 426.33 207.58 429.00 207.00 C431.67 206.42 435.17 206.47 437.00 206.50 C438.83 206.53 438.92 206.92 440.00 207.20 C441.08 207.48 442.25 207.70 443.50 208.20 C444.75 208.70 446.25 210.03 447.50 210.20 C448.75 210.37 449.83 209.32 451.00 209.20 C452.17 209.08 453.58 209.28 454.50 209.50 C455.42 209.72 455.83 210.37 456.50 210.50 C457.17 210.63 457.83 209.97 458.50 210.30 C459.17 210.63 459.50 211.55 460.50 212.50 C461.50 213.45 462.92 215.07 464.50 216.00 C466.08 216.93 468.58 217.93 470.00 218.10 C471.42 218.27 471.88 217.18 473.00 217.00 C474.12 216.82 475.38 216.50 476.75 217.00 C478.12 217.50 479.50 219.28 481.25 220.00 C483.00 220.72 485.50 220.95 487.25 221.35 C489.00 221.75 490.00 222.06 491.75 222.40 C493.50 222.74 495.75 223.58 497.75 223.40 C499.75 223.22 502.12 221.52 503.75 221.35 C505.38 221.18 505.75 221.75 507.50 222.40 C509.25 223.05 512.18 225.25 514.25 225.25 C516.32 225.25 518.02 222.43 519.90 222.40 C521.77 222.38 523.82 224.62 525.50 225.10 C527.18 225.57 528.75 225.20 530.00 225.25 C531.25 225.30 531.83 225.61 533.00 225.40 C534.17 225.19 535.50 224.40 537.00 224.00 C538.50 223.60 540.33 222.67 542.00 223.00 C543.67 223.33 545.17 224.83 547.00 226.00 C548.83 227.17 551.17 229.17 553.00 230.00 C554.83 230.83 556.17 230.33 558.00 231.00 C559.83 231.67 562.17 234.00 564.00 234.00 C565.83 234.00 567.17 232.67 569.00 231.00 C570.83 229.33 573.00 224.83 575.00 224.00 C577.00 223.17 579.17 226.00 581.00 226.00 C582.83 226.00 584.33 223.83 586.00 224.00 C587.67 224.17 589.17 226.07 591.00 227.00 C592.83 227.93 594.83 229.60 597.00 229.60 C599.17 229.60 601.33 228.10 604.00 227.00 C606.67 225.90 610.50 223.33 613.00 223.00 C615.50 222.67 617.17 224.00 619.00 225.00 C620.83 226.00 622.83 228.33 624.00 229.00 C625.17 229.67 624.83 228.67 626.00 229.00 C627.17 229.33 629.17 231.00 631.00 231.00 C632.83 231.00 634.83 229.57 637.00 229.00 C639.17 228.43 640.83 227.93 644.00 227.60 C647.17 227.27 652.67 227.27 656.00 227.00 C659.33 226.73 661.33 226.83 664.00 226.00 C666.67 225.17 669.33 223.67 672.00 222.00 C674.67 220.33 677.33 217.50 680.00 216.00 C682.67 214.50 685.05 214.10 688.00 213.00 C690.95 211.90 695.03 209.77 697.70 209.40 C700.37 209.03 701.32 210.20 704.00 210.80 C706.68 211.40 711.23 212.88 713.80 213.00 C716.37 213.12 717.53 212.05 719.40 211.50 C721.27 210.95 723.13 209.70 725.00 209.70 C726.87 209.70 728.77 210.50 730.60 211.50 C732.43 212.50 734.37 214.18 736.00 215.70 C737.63 217.22 738.97 219.08 740.40 220.60 C741.83 222.12 743.33 223.82 744.60 224.80 C745.87 225.78 747.43 226.22 748.00 226.50" fill="none" stroke="#2A2A2A" stroke-width="1.05" stroke-linejoin="round"/>
<line x1="13" y1="447.6" x2="28.7" y2="447.6" stroke="#2A2A2A" stroke-width="1"/>
<line x1="13" y1="459" x2="28.7" y2="459" stroke="#A08A8A" stroke-width="1.1"/>
<text x="32.8" y="451.0" font-size="9.6" text-anchor="start" fill="#222" stroke="#222" stroke-width="0.06" textLength="77.8" lengthAdjust="spacingAndGlyphs">Amplitude gesamt</text>
<text x="32.8" y="462.0" font-size="9.6" text-anchor="start" fill="#222" stroke="#222" stroke-width="0.06" textLength="95.7" lengthAdjust="spacingAndGlyphs">Impedanz Verstärker 1</text>
<rect x="2" y="480.2" width="795" height="0.8" fill="#D8D6CC"/>
<rect x="2" y="481" width="795" height="1" fill="#858070"/>
<rect x="2" y="482" width="795" height="1" fill="#F0EEE4"/>
<rect x="2" y="483" width="795" height="1" fill="#C4C0B4"/>
<text x="4.2" y="493.3" font-size="8.2" text-anchor="start" fill="#1a1a1a" stroke="#1a1a1a" stroke-width="0.15" textLength="94.4" lengthAdjust="spacingAndGlyphs">Berechnung war erfolgreich.</text>
<rect x="2.1" y="22" width="0.9" height="475.6" fill="#D8E4F4" opacity="0.8"/>
<rect x="796" y="22" width="1.6" height="475.6" fill="#F6F8F4" opacity="0.8"/>
</svg>
</body></html>
